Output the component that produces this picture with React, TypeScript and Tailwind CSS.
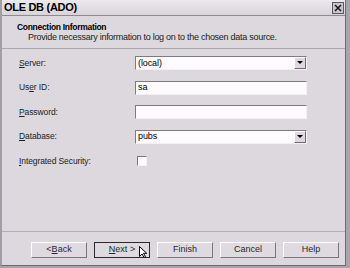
import React from 'react';

const font = { fontFamily: '"Liberation Sans", Arial, sans-serif' };

// mnemonic label, underlines one char
const Mn: React.FC<{ text: string; at: number }> = ({ text, at }) => (
  <span>
    {text.slice(0, at)}
    <span className="underline underline-offset-1">{text[at]}</span>
    {text.slice(at + 1)}
  </span>
);

const Field: React.FC<{ value?: string; combo?: boolean }> = ({ value, combo }) => (
  <div className="w-[172px] h-[14px] bg-[#fdfbfe] border-t border-l border-t-[#7d7a80] border-l-[#7d7a80] border-b border-r border-b-[#f3f1f4] border-r-[#f3f1f4] flex items-center">
    <div className="flex-1 pl-[2px] text-[9px] text-black leading-none">{value}</div>
    {combo && (
      <div className="w-[12px] h-[12px] bg-[#dcd8de] border border-t-white border-l-white border-b-[#6f6c72] border-r-[#6f6c72] flex items-center justify-center">
        <svg width="6" height="4" viewBox="0 0 6 4">
          <path d="M0 0h6L3 3z" fill="#000" />
        </svg>
      </div>
    )}
  </div>
);

const Btn: React.FC<{ children: React.ReactNode; def?: boolean }> = ({ children, def }) => (
  <div className={`relative w-[56px] h-[16px] flex items-center justify-center text-[9px] text-[#2a282c] bg-[#dedae0] border ${def ? 'border-[#2c2a2e]' : 'border-t-white border-l-white border-b-[#7a777d] border-r-[#7a777d]'}`}>
    {children}
  </div>
);

const App: React.FC = () => {
  const rows: { label: React.ReactNode; field: React.ReactNode }[] = [
    { label: <Mn text="Server:" at={0} />, field: <Field value="(local)" combo /> },
    { label: <Mn text="User ID:" at={2} />, field: <Field value="sa" /> },
    { label: <Mn text="Password:" at={0} />, field: <Field /> },
    { label: <Mn text="Database:" at={0} />, field: <Field value="pubs" combo /> },
  ];

  return (
    <div style={font} className="w-[350px] h-[268px] bg-[#a8a4ab] overflow-hidden">
      <div className="w-[346px] h-[266px] bg-[#dcd8de] border-l-2 border-[#a29ea6] border-r border-r-[#6d6a70] border-b border-b-[#6d6a70] flex flex-col">
        {/* title bar */}
        <div className="h-[16px] flex items-center justify-between pl-[2px] pr-[1px] bg-gradient-to-b from-[#ebe8ee] to-[#d8d4da] border-b border-[#8e8a92]">
          <span className="text-[11px] font-bold text-black tracking-[-0.3px]">OLE DB (ADO)</span>
          <div className="w-[12px] h-[12px] bg-[#c9c5cc] border border-[#5b585e] flex items-center justify-center">
            <svg width="8" height="8" viewBox="0 0 8 8">
              <path d="M1 1l6 6M7 1l-6 6" stroke="#1c1a1e" strokeWidth="1.6" />
            </svg>
          </div>
        </div>

        {/* header */}
        <div className="h-[33px] pl-[15px] pt-[6px] border-b border-[#a9a6ac] flex flex-col">
          <span className="text-[8.5px] font-bold text-black leading-[10px] tracking-[-0.3px]">Connection Information</span>
          <span className="pl-[11px] text-[9px] text-[#222] leading-[11px] tracking-[-0.27px]">
            Provide necessary information to log on to the chosen data source.
          </span>
        </div>

        {/* form */}
        <div className="flex flex-col pl-[17px] pt-[7px] gap-[10.5px] text-[8.5px] text-[#222] tracking-[-0.1px]">
          {rows.map((r, i) => (
            <div key={i} className="flex items-center h-[14px]">
              <div className="w-[116px]">{r.label}</div>
              {r.field}
            </div>
          ))}
          <div className="flex items-center h-[14px]">
            <div className="w-[118px]"><Mn text="Integrated Security:" at={0} /></div>
            <div className="w-[10px] h-[10px] bg-[#fdfbfe] border border-t-[#7d7a80] border-l-[#7d7a80] border-b-[#f3f1f4] border-r-[#f3f1f4]" />
          </div>
        </div>

        <div className="flex-1" />

        {/* footer */}
        <div className="border-t border-[#b1aeb4] h-[34px] flex items-start pt-[10px] justify-end gap-[7px] pr-[6px]">
          <Btn>&lt; <Mn text="Back" at={0} /></Btn>
          <Btn def>
            <Mn text="Next" at={0} />&nbsp;&gt;
            <svg className="absolute left-[44px] top-[3px]" width="8" height="12" viewBox="0 0 8 12">
              <path d="M0.5 0.5v10l2.5-2.5 2 3.5 1.5-0.8-2-3.4h3.2z" fill="#fff" stroke="#000" strokeWidth="1" />
            </svg>
          </Btn>
          <Btn>Finish</Btn>
          <Btn>Cancel</Btn>
          <Btn>Help</Btn>
        </div>
      </div>
    </div>
  );
};

export default App;
